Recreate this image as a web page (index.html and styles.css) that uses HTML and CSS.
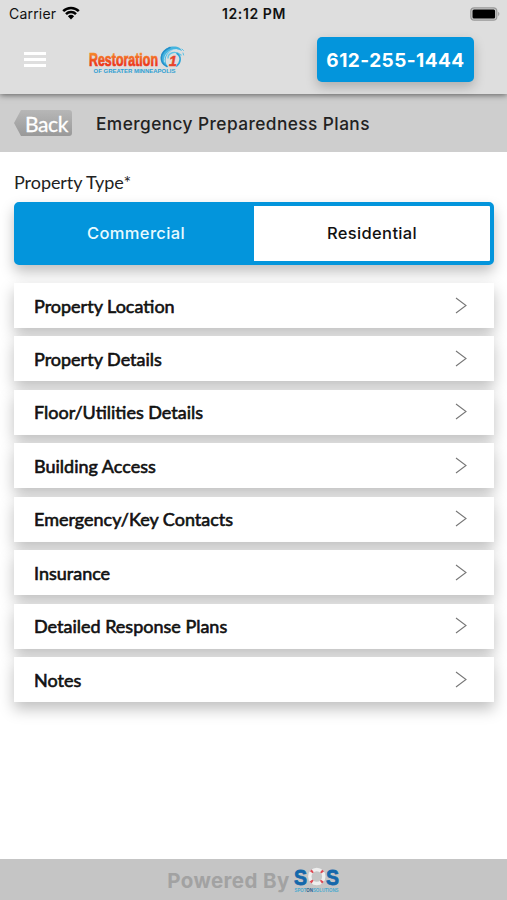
FILE: index.html
```html
<!DOCTYPE html>
<html lang="en">
<head>
    <meta charset="UTF-8">
    <meta name="viewport" content="width=device-width, initial-scale=1.0">
    <title>Emergency Preparedness Plans</title>
    <link rel="stylesheet" href="styles.css">
</head>
<body>
    <header class="header">
        <div class="status-bar">
            <div class="carrier">
                <span>Carrier</span>
                <svg class="wifi" viewBox="0 0 18 14">
                    <path d="M1.2 5.2a11 11 0 0 1 15.6 0M4 8.1a7 7 0 0 1 10 0" fill="none" stroke="#000" stroke-width="2.5"/>
                    <path d="M9 13.4L5.9 10.2a4.5 4.5 0 0 1 6.2 0z"/>
                </svg>
            </div>
            <span class="time">12:12 PM</span>
            <svg class="battery" viewBox="0 0 31 14">
                <rect x=".8" y=".8" width="26" height="12.4" rx="3.5" fill="#ccc" stroke="#999" stroke-width="1.2"/>
                <rect x="2.5" y="2.5" width="22.6" height="9" rx="1.5"/>
                <path d="M28.2 4.8q2.4 2.2 0 4.4z" fill="#999"/>
            </svg>
        </div>
        <div class="nav">
            <div class="menu"><span></span><span></span><span></span></div>
            <svg class="logo" viewBox="0 0 98 32">
                <defs>
                    <linearGradient id="fire" x1="0" y1="0" x2="0" y2="1">
                        <stop offset=".2" stop-color="#f58a2b"/>
                        <stop offset=".7" stop-color="#ee3a1c"/>
                    </linearGradient>
                </defs>
                <text class="logo-name" x="1" y="22" textLength="69" lengthAdjust="spacingAndGlyphs">Restoration</text>
                <path d="M80 22.500C69 19 71 5 84 2.500C90 2 93 4 94 7C88 4 82 6 79 11C77 15 77 19 80 22.500z" fill="#45b4df"/>
                <g fill="none" stroke-linecap="round">
                    <path d="M79 22.5C71 19 71 8 82 3.5" stroke="#238fc9" stroke-width="1.6"/>
                    <path d="M76.500 18C75 11 81 5 89 5.500" stroke="#d2edf6" stroke-width=".7"/>
                    <path d="M80 14C80 9 87 6 93 11" stroke="#62c6e7" stroke-width="1.4"/>
                    <path d="M89 9.500C94 13 92.500 19 88.500 22" stroke="#2ba5d8" stroke-width="1.6"/>
                    <path d="M94 5l1.500 1.500M95 9l.6 2" stroke="#5ac0e5" stroke-width="1"/>
                </g>
                <text class="logo-one" x="81" y="22">1</text>
                <text class="logo-place" x="5.5" y="28.8" textLength="82" lengthAdjust="spacingAndGlyphs">OF GREATER MINNEAPOLIS</text>
            </svg>
            <a class="phone" href="tel:612-255-1444">612-255-1444</a>
        </div>
    </header>

    <div class="title-bar">
        <a class="back" href="#">Back</a>
        <h1>Emergency Preparedness Plans</h1>
    </div>

    <main class="content">
        <div class="label">Property Type*</div>
        <div class="toggle">
            <div class="option active">Commercial</div>
            <div class="option">Residential</div>
        </div>

        <div class="list">
            <div class="item"><span>Property Location</span><svg class="arrow" viewBox="0 0 12 17"><path d="M1 1l10 7.5L1 16"/></svg></div>
            <div class="item"><span>Property Details</span><svg class="arrow" viewBox="0 0 12 17"><path d="M1 1l10 7.5L1 16"/></svg></div>
            <div class="item"><span>Floor/Utilities Details</span><svg class="arrow" viewBox="0 0 12 17"><path d="M1 1l10 7.5L1 16"/></svg></div>
            <div class="item"><span>Building Access</span><svg class="arrow" viewBox="0 0 12 17"><path d="M1 1l10 7.5L1 16"/></svg></div>
            <div class="item"><span>Emergency/Key Contacts</span><svg class="arrow" viewBox="0 0 12 17"><path d="M1 1l10 7.5L1 16"/></svg></div>
            <div class="item"><span>Insurance</span><svg class="arrow" viewBox="0 0 12 17"><path d="M1 1l10 7.5L1 16"/></svg></div>
            <div class="item"><span>Detailed Response Plans</span><svg class="arrow" viewBox="0 0 12 17"><path d="M1 1l10 7.5L1 16"/></svg></div>
            <div class="item"><span>Notes</span><svg class="arrow" viewBox="0 0 12 17"><path d="M1 1l10 7.5L1 16"/></svg></div>
        </div>
    </main>

    <footer class="footer">
        <span>Powered By</span>
        <svg class="sos" viewBox="0 0 46 26">
            <text class="sos-letter" x="0" y="17.5" textLength="13" lengthAdjust="spacingAndGlyphs">S</text>
            <circle cx="22.8" cy="9.5" r="7" fill="none" stroke="#eee" stroke-width="3.4"/>
            <circle cx="22.8" cy="9.5" r="7" fill="none" stroke="#dd4a55" stroke-width="3.4" stroke-dasharray="2 8.996" stroke-dashoffset="-4.5"/>
            <text class="sos-letter" x="32" y="17.5" textLength="13" lengthAdjust="spacingAndGlyphs">S</text>
            <text class="sos-name" x="0.5" y="25" textLength="44" lengthAdjust="spacingAndGlyphs">SPOT<tspan fill="#235a8c">ON</tspan>SOLUTIONS</text>
        </svg>
    </footer>
</body>
</html>
```
FILE: styles.css
```css
:root {
    --blue: #0395dc;
    --header-bg: #dedede;
    --bar-bg: #cecece;
    --footer-bg: #c5c5c5;
}

* {
    box-sizing: border-box;
}

body {
    margin: 0;
    height: 100vh;
    display: flex;
    flex-direction: column;
    overflow: hidden;
    background-color: #fff;
    font-family: Inter, sans-serif;
    color: #222;
}

a {
    text-decoration: none;
}

svg {
    overflow: visible;
}

.header {
    position: relative;
    height: 94px;
    background-color: var(--header-bg);
    box-shadow: 0 1px 6px rgba(0, 0, 0, 0.55);
}

.status-bar {
    height: 27px;
    padding: 0 6px 0 9px;
    display: grid;
    grid-template-columns: 1fr auto 1fr;
    align-items: center;
    color: #111;
}

.carrier {
    display: flex;
    align-items: center;
    gap: 6px;
    font-size: 14px;
    letter-spacing: 0.2px;
}

.wifi {
    width: 18px;
    height: 14px;
    margin-top: -2px;
}

.time {
    margin-right: 2px;
    font-size: 14px;
    font-weight: 600;
    letter-spacing: 0.6px;
}

.battery {
    width: 31px;
    height: 14px;
    justify-self: end;
}

.nav {
    height: 67px;
    padding: 10px 33px 0 24px;
    display: flex;
    align-items: flex-start;
}

.menu {
    width: 22px;
    margin: 15px 42px 0 0;
    display: flex;
    flex-direction: column;
    gap: 3px;
}

.menu span {
    height: 3px;
    background-color: #fff;
}

.logo {
    width: 98px;
    height: 32px;
    margin-top: 7px;
}

.logo-name {
    font: bold 18.5px "Liberation Sans", sans-serif;
    fill: url(#fire);
    stroke: url(#fire);
    stroke-width: 0.7px;
}

.logo-one {
    font: italic bold 14px "Liberation Sans", sans-serif;
    fill: #e8432a;
    stroke: #e8432a;
    stroke-width: 0.5px;
}

.logo-place {
    font: bold 5.3px "Liberation Sans", sans-serif;
    fill: #2f9fd3;
}

.phone {
    width: 157px;
    height: 45px;
    margin-left: auto;
    border-radius: 5px;
    background-color: var(--blue);
    box-shadow: 0 5px 12px rgba(0, 0, 0, 0.22);
    color: #fff;
    font-size: 19px;
    font-weight: 700;
    letter-spacing: 0.45px;
    line-height: 47px;
    text-align: center;
}

.title-bar {
    height: 58px;
    padding: 0 14px;
    display: flex;
    align-items: center;
    background-color: var(--bar-bg);
}

.back {
    width: 58px;
    height: 26px;
    padding-left: 11px;
    border-radius: 0 3px 3px 0;
    background: linear-gradient(#b7b7b7, #999);
    clip-path: polygon(0 50%, 7px 0, 100% 0, 100% 100%, 7px 100%);
    color: #fff;
    font: 21px/27px Lato, sans-serif;
    letter-spacing: -0.4px;
    -webkit-text-stroke: 0.3px #fff;
}

h1 {
    margin: 0 0 0 24px;
    font-size: 17.3px;
    font-weight: 500;
    letter-spacing: 0.43px;
}

.content {
    flex: 1;
    padding: 19px 13px 0 14px;
}

.label {
    height: 31px;
    font: 18px/23px Lato, sans-serif;
    letter-spacing: -0.05px;
}

.toggle {
    height: 63px;
    display: flex;
    border: 4px solid var(--blue);
    border-radius: 5px;
    background-color: #fff;
    box-shadow: 0 7px 14px rgba(0, 0, 0, 0.25);
}

.option {
    flex: 1;
    font-size: 16.5px;
    font-weight: 500;
    letter-spacing: 0.35px;
    line-height: 55px;
    text-align: center;
    color: #111;
}

.option.active {
    background-color: var(--blue);
    color: #e8faff;
}

.list {
    margin-top: 18px;
    display: flex;
    flex-direction: column;
    gap: 8.45px;
}

.item {
    position: relative;
    height: 45px;
    padding: 0 27px 0 20px;
    display: flex;
    align-items: center;
    justify-content: space-between;
    background-color: #fff;
    box-shadow: 0 7px 14px rgba(0, 0, 0, 0.25);
    color: #111;
    font: 18px Lato, sans-serif;
    -webkit-text-stroke: 0.6px #111;
}

.arrow {
    width: 12px;
    height: 17px;
    margin-top: -1px;
    fill: none;
    stroke: #777;
    stroke-width: 1.1;
}

.footer {
    height: 41px;
    padding-top: 1px;
    display: flex;
    align-items: center;
    justify-content: center;
    gap: 4px;
    background-color: var(--footer-bg);
    color: #a2a2a2;
    font-size: 20.5px;
    font-weight: 700;
    letter-spacing: 0.4px;
}

.sos {
    width: 46px;
    height: 26px;
}

.sos-letter {
    font: bold 22px "Liberation Sans", sans-serif;
    letter-spacing: 0;
    fill: #1468ab;
    stroke: #1468ab;
    stroke-width: 0.8px;
}

.sos-name {
    font: bold 5.5px "Liberation Sans", sans-serif;
    letter-spacing: 0;
    fill: #48a9cf;
}
```
